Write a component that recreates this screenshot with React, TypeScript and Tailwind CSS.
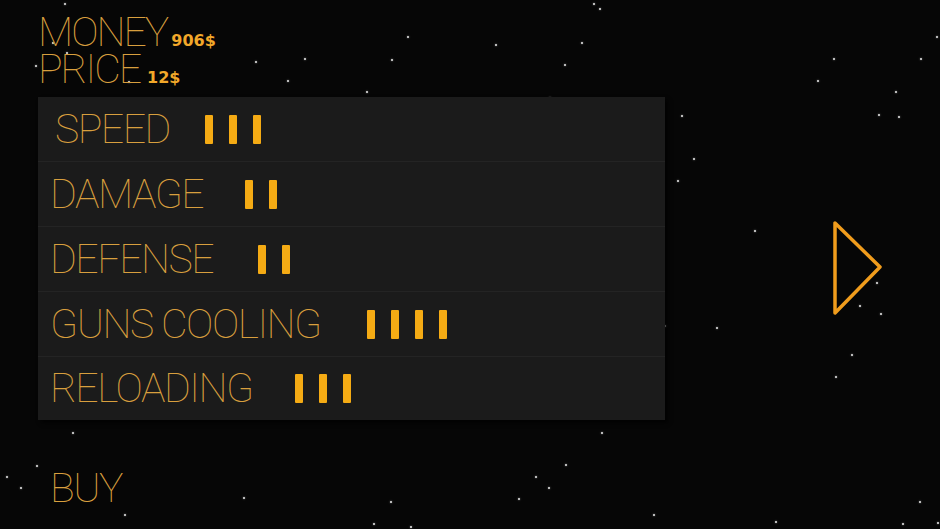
import React from "react";

const stars: [number, number][] = [
  [65, 4], [53, 43], [67, 53], [36, 66], [129, 82], [256, 62], [305, 59], [288, 81], [165, 158],
  [408, 37], [392, 60], [367, 92], [496, 45], [582, 43], [565, 65], [594, 4], [600, 9], [550, 98],
  [937, 37], [834, 59], [921, 59], [818, 81], [896, 92], [879, 115], [899, 117], [682, 116], [694, 159],
  [562, 128], [426, 145], [493, 160], [476, 181], [601, 170], [584, 193], [456, 229], [587, 273],
  [678, 181], [755, 231], [665, 326], [717, 328], [877, 283], [860, 306], [881, 314], [852, 355],
  [72, 169], [149, 180], [55, 180], [57, 193], [245, 171], [123, 255],
  [348, 283], [331, 305], [323, 355], [306, 377], [434, 370], [418, 393], [518, 340], [502, 362],
  [648, 347], [618, 411], [178, 297], [136, 326], [120, 348], [145, 358], [59, 410],
  [836, 377], [920, 502], [654, 515], [776, 522], [903, 524], [938, 523],
  [602, 433], [566, 465], [536, 477], [549, 488], [519, 499], [391, 502], [374, 524], [411, 527],
  [73, 433], [37, 466], [7, 477], [21, 488], [244, 498], [125, 515],
];

type Row = { label: string; bars: number; gap: string; pl: string; h: string };

const rows: Row[] = [
  { label: "SPEED", bars: 3, gap: "gap-[35px]", pl: "pl-[17px]", h: "h-[64px]" },
  { label: "DAMAGE", bars: 2, gap: "gap-[42px]", pl: "pl-[12px]", h: "h-[65px]" },
  { label: "DEFENSE", bars: 2, gap: "gap-[45px]", pl: "pl-[12px]", h: "h-[65px]" },
  { label: "GUNS COOLING", bars: 4, gap: "gap-[46px]", pl: "pl-[12px]", h: "h-[65px]" },
  { label: "RELOADING", bars: 3, gap: "gap-[42px]", pl: "pl-[12px]", h: "h-[64px]" },
];

const thin = { fontFamily: "Roboto, 'Noto Sans', sans-serif" };
const bold = { fontFamily: "'DejaVu Sans', Verdana, sans-serif" };

function Bars({ n }: { n: number }) {
  return (
    <div className="flex gap-[16px]">
      {Array.from({ length: n }).map((_, i) => (
        <div key={i} className="w-[8px] h-[29px] bg-[#f5ab14] rounded-[1px]" />
      ))}
    </div>
  );
}

export default function App() {
  return (
    <div className="relative w-[940px] h-[529px] overflow-hidden bg-[#060606]">
      <div className="absolute inset-0">
        {stars.map(([x, y], i) => (
          <div
            key={i}
            className="absolute w-[2px] h-[2px] rounded-full bg-[#e6e6e6] shadow-[0_0_2px_rgba(255,255,255,0.6)]"
            style={{ left: x - 1, top: y - 1 }}
          />
        ))}
      </div>

      <div className="relative flex h-full">
        <div className="flex flex-col pl-[38px] w-[665px] shrink-0">
          <div className="pt-[14px] text-[#d89f3e]" style={thin}>
            <div className="flex items-baseline h-[37px]">
              <span className="text-[41px] leading-[37px] font-thin tracking-[-2px]">MONEY</span>
              <span className="ml-[4px] text-[16px] leading-none font-bold text-[#f2a82a]" style={bold}>
                906$
              </span>
            </div>
            <div className="flex items-baseline h-[37px]">
              <span className="text-[41px] leading-[37px] font-thin tracking-[-2px]">PRICE</span>
              <span className="ml-[7px] text-[16px] leading-none font-bold text-[#f2a82a]" style={bold}>
                12$
              </span>
            </div>
          </div>

          <div className="mt-[9px] bg-[#1b1b1b] shadow-[3px_3px_4px_rgba(0,0,0,0.7)] flex flex-col">
            {rows.map((r, i) => (
              <div
                key={r.label}
                className={`flex items-center ${r.h} ${r.pl} ${r.gap} ${
                  i > 0 ? "border-t border-[#242424]" : ""
                }`}
              >
                <span
                  className="text-[41px] leading-none font-thin text-[#d89f3e] tracking-[-1.5px]"
                  style={thin}
                >
                  {r.label}
                </span>
                <Bars n={r.bars} />
              </div>
            ))}
          </div>

          <div className="mt-[48px] pl-[12px]">
            <span
              className="text-[41px] leading-none font-thin text-[#d89f3e] tracking-[-1.5px]"
              style={thin}
            >
              BUY
            </span>
          </div>
        </div>

        <div className="flex-1 flex items-center justify-end pr-[56px] pt-[6px]">
          <svg width="52" height="96" viewBox="0 0 52 96" fill="none">
            <path
              d="M3 3 L3 93 L48 47 Z"
              stroke="#f09c1c"
              strokeWidth="3.5"
              strokeLinejoin="round"
            />
          </svg>
        </div>
      </div>
    </div>
  );
}
